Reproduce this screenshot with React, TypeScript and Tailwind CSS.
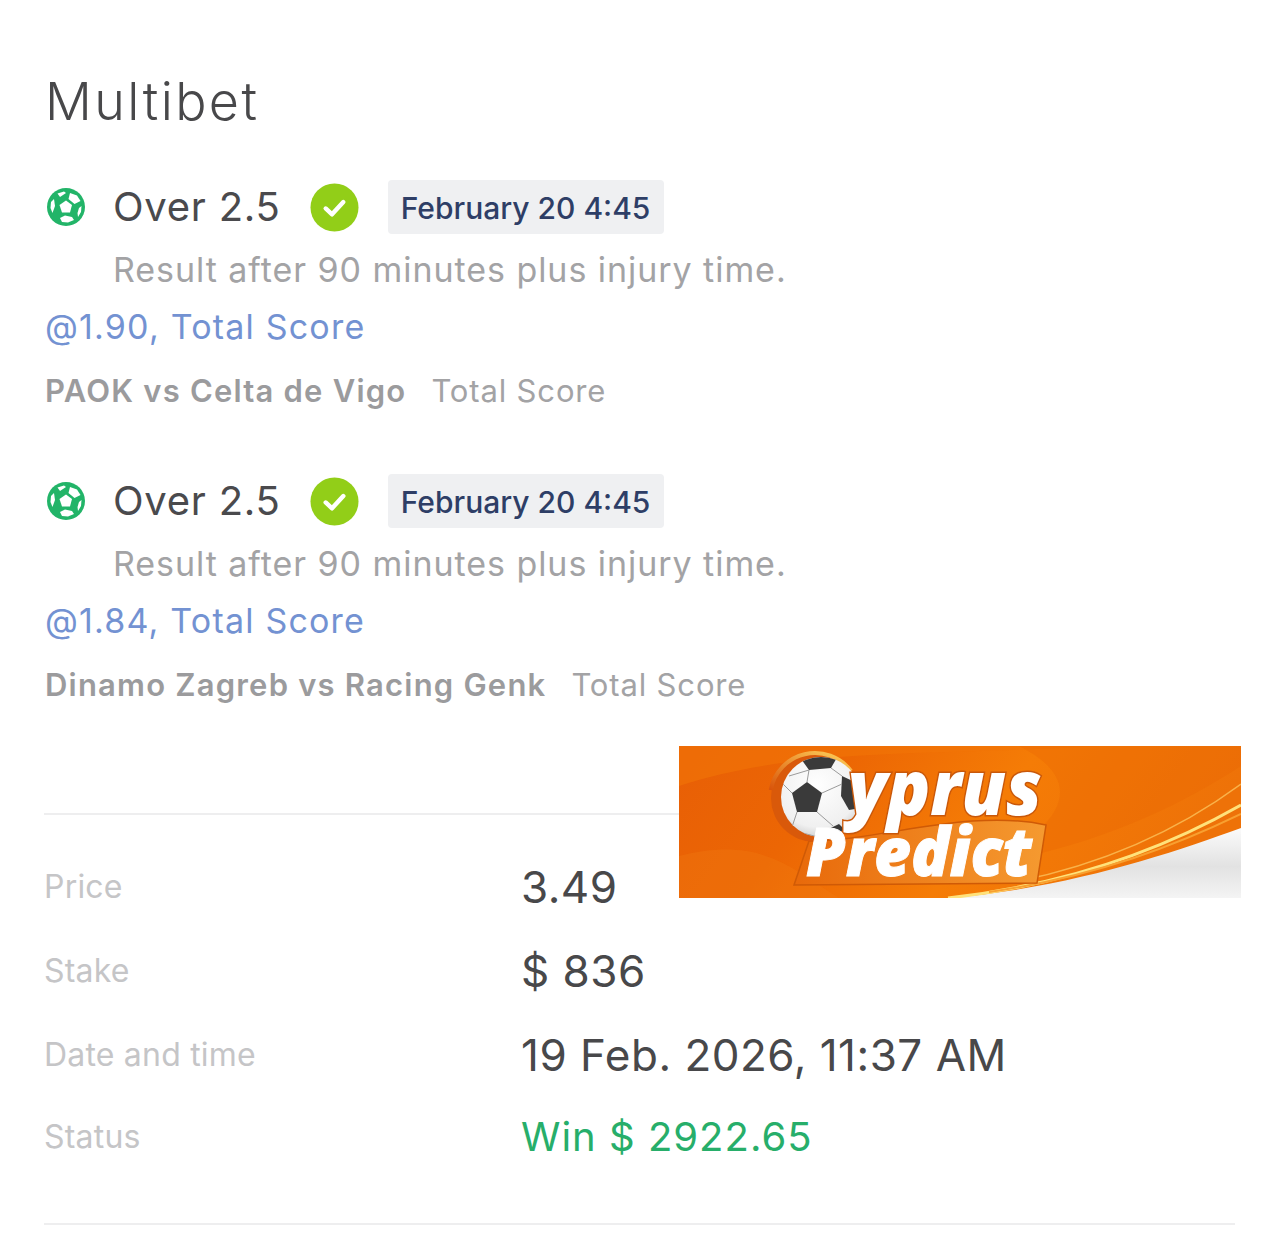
import React from 'react';

const font = { fontFamily: 'Inter, sans-serif' };

const SoccerIcon = () => (
  <svg viewBox="0 0 40 40" className="w-[40px] h-[40px] shrink-0">
    <circle cx="20" cy="20" r="19" fill="#22b468" />
    <path d="M13.5 18 L20 13.5 L26 18 L24 25.5 L16 25.5 Z" fill="#fff" />
    <path d="M24 6 L31 8.5 L34.5 14 L28.5 17 L22.5 12 Z" fill="#fff" />
    <path d="M14 31 L19 28.5 L26 30 L28 33 L22 35.5 L16 35 Z" fill="#fff" />
    <path d="M11.5 6.5 L18 4.5 L20 6 L14 10 Z" fill="#fff" />
    <path d="M5 15 L8 12 L9 19 L6.5 26 L4.5 21 Z" fill="#fff" />
    <path d="M33 21 L35.5 19 L35 25 L32 30 L31.5 26 Z" fill="#fff" />
  </svg>
);

const CheckBadge = () => (
  <svg viewBox="0 0 50 50" className="w-[49px] h-[49px] shrink-0">
    <circle cx="25" cy="25" r="24.5" fill="#92ce18" />
    <path d="M16 26 L22.5 32 L34 19.5" fill="none" stroke="#fff" strokeWidth="4.5" strokeLinecap="round" strokeLinejoin="round" />
  </svg>
);

const Leg = ({ price, match }: { price: string; match: string }) => (
  <div>
    <div className="flex items-center h-[54px]">
      <span className="ml-[1px]"><SoccerIcon /></span>
      <span className="ml-[27px] text-[40px] leading-none tracking-[0.75px] text-[#4a4a4d]">Over 2.5</span>
      <span className="ml-[29px]"><CheckBadge /></span>
      <span className="ml-[29px] h-[54px] w-[276px] pt-[3px] flex items-center justify-center rounded bg-[#eff0f2] text-[30px] font-medium text-[#2e3e66]">
        February 20 4:45
      </span>
    </div>
    <div className="ml-[68px] mt-[14px] text-[34px] leading-[44px] tracking-[0.95px] text-[#a3a3a5]">
      Result after 90 minutes plus injury time.
    </div>
    <div className="mt-[13px] text-[34px] leading-[44px] tracking-[1.2px] text-[#7392d2]">@{price}, Total Score</div>
    <div className="mt-[20px] flex text-[31px] leading-[44px] gap-[25px]">
      <span className="font-semibold tracking-[1.2px] text-[#9b9b9d]">{match}</span>
      <span className="tracking-[0.85px] text-[#a3a3a5]">Total Score</span>
    </div>
  </div>
);

const Row = ({ label, value, green }: { label: string; value: string; green?: boolean }) => (
  <div className={`flex items-center h-[84px] ${green ? '-mt-[2px]' : ''}`}>
    <span className="w-[477px] text-[32px] tracking-[0.2px] text-[#c5c5c7]">{label}</span>
    <span className={green ? 'text-[40px] tracking-[1px] text-[#27ae6a]' : 'text-[44px] tracking-[0.5px] text-[#48484a]'}>{value}</span>
  </div>
);

const Banner = () => (
  <svg viewBox="0 0 562 152" className="absolute left-[679px] top-[746px] w-[562px] h-[152px]">
    <defs>
      <linearGradient id="bg" x1="0" y1="0" x2="1" y2="0.2">
        <stop offset="0" stopColor="#e85f06" />
        <stop offset="0.3" stopColor="#ec6604" />
        <stop offset="0.62" stopColor="#f57c06" />
        <stop offset="1" stopColor="#ee7208" />
      </linearGradient>
      <linearGradient id="plate" x1="0" y1="0" x2="1" y2="0">
        <stop offset="0" stopColor="#e8690a" />
        <stop offset="1" stopColor="#f59a30" />
      </linearGradient>
      <linearGradient id="white" x1="0" y1="0" x2="0" y2="1">
        <stop offset="0" stopColor="#fbfbfb" />
        <stop offset="0.55" stopColor="#e2e2e2" />
        <stop offset="1" stopColor="#f4f4f4" />
      </linearGradient>
      <linearGradient id="ring" x1="0" y1="1" x2="1" y2="0">
        <stop offset="0" stopColor="#d9540a" />
        <stop offset="1" stopColor="#ffd35c" />
      </linearGradient>
      <radialGradient id="ballShade" cx="0.45" cy="0.35" r="0.75">
        <stop offset="0" stopColor="#ffffff" />
        <stop offset="0.7" stopColor="#f0f0f0" />
        <stop offset="1" stopColor="#bdbdbd" />
      </radialGradient>
      <clipPath id="ballClip"><circle cx="142" cy="51" r="40" /></clipPath>
    </defs>
    <rect width="562" height="152" fill="url(#bg)" />
    <path d="M0 40 C120 0 260 10 420 0 L300 0 L0 0 Z" fill="#f27406" opacity="0.6" />
    <path d="M340 0 C420 40 370 90 300 120 C420 100 500 60 562 20 L562 0 Z" fill="#e86204" opacity="0.3" />
    <path d="M0 110 C80 90 110 120 160 152 L0 152 Z" fill="#f27a10" opacity="0.35" />
    <path d="M269 152 C390 142 490 108 562 82 L562 152 Z" fill="url(#white)" />
    <path d="M269 152 C395 138 490 100 562 59" stroke="#ffe27a" strokeWidth="3" fill="none" />
    <path d="M330 137 C430 118 505 80 562 38" stroke="#f9b24a" strokeWidth="1.5" fill="none" />
    <path d="M310 146 C420 130 500 98 562 68" stroke="#f8a030" strokeWidth="2" fill="none" />
    <path d="M115 139 L130 95 C200 95 290 62 367 79 L358 137 Z" fill="url(#plate)" stroke="#cf5a06" strokeWidth="1.5" />
    <circle cx="136" cy="52" r="44" fill="#d9590a" />
    <path d="M172 25 A45 45 0 0 0 91.7 44" fill="none" stroke="url(#ring)" strokeWidth="4" />
    <circle cx="142" cy="51" r="40" fill="url(#ballShade)" />
    <g clipPath="url(#ballClip)">
      <path d="M128 36 L143 47 L138 66 L118 66 L113 47 Z" fill="#3a3a3a" />
      <path d="M163 30 L180 38 L182 62 L170 64 L162 50 Z" fill="#3a3a3a" />
      <path d="M120 10 L160 8 L152 22 L130 24 Z" fill="#3a3a3a" />
      <path d="M135 90 L160 78 L170 88 L150 100 Z" fill="#3a3a3a" />
      <path d="M128 36 L130 24 M143 47 L163 38 M138 66 L154 80 M118 66 L112 84 L135 90 M113 47 L104 38 M152 22 L163 30 M130 24 L110 30" stroke="#9a9a9a" strokeWidth="1" fill="none" />
    </g>
    <text x="169" y="69" textLength="194" lengthAdjust="spacingAndGlyphs" fontFamily="Open Sans, sans-serif" fontStyle="italic" fontWeight="800" fontSize="76" fill="#fff" stroke="#c9580a" strokeWidth="3" paintOrder="stroke">yprus</text>
    <text x="127" y="130" textLength="226" lengthAdjust="spacingAndGlyphs" fontFamily="Open Sans, sans-serif" fontStyle="italic" fontWeight="800" fontSize="68" fill="#fff" stroke="#fff" strokeWidth="1">Predict</text>
  </svg>
);

export default function App() {
  return (
    <div className="relative w-[1280px] h-[1255px] bg-white overflow-hidden px-[45px]" style={font}>
      <h1 className="pt-[70px] text-[52px] leading-[64px] font-light tracking-[2.4px] text-[#48484a]">Multibet</h1>
      <div className="mt-[46px] flex flex-col gap-[61px]">
        <Leg price="1.90" match="PAOK vs Celta de Vigo" />
        <Leg price="1.84" match="Dinamo Zagreb vs Racing Genk" />
      </div>
      <div className="mt-[106px] -ml-px border-t-2 border-[#eeeeef] pt-[30px]">
        <Row label="Price" value="3.49" />
        <Row label="Stake" value="$ 836" />
        <Row label="Date and time" value="19 Feb. 2026, 11:37 AM" />
        <Row label="Status" value="Win $ 2922.65" green />
      </div>
      <div className="mt-[44px] -ml-px border-t-2 border-[#eeeeef]" />
      <Banner />
    </div>
  );
}
